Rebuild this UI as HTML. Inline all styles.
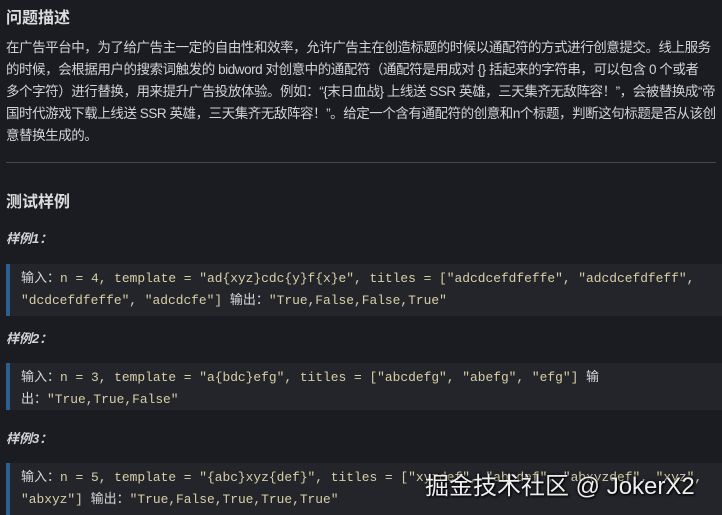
<!DOCTYPE html>
<html><head><meta charset="utf-8"><style>
body{margin:0;width:722px;height:512px;overflow:hidden;background:#1b1c21;color:#d2d3d6;font-family:"Liberation Sans","Noto Sans CJK SC",sans-serif;position:relative}
.a{position:absolute;white-space:nowrap}
.p{font-size:13.5px;left:6px;line-height:22px;letter-spacing:-0.45px}
.ex{left:6px;font-size:13px;font-weight:bold;font-style:italic}
.blk{position:absolute;left:6px;right:0;background:#23252b;border-left:4px solid #2a5f8f;overflow:hidden}
.code{position:absolute;left:11px;font-family:"Liberation Mono","Noto Sans CJK SC",monospace;font-size:12.9px;line-height:21px;color:#d9cfa6;white-space:nowrap}
.code b{font-weight:normal;color:#d8d8d8;font-family:"Liberation Sans","Noto Sans CJK SC",sans-serif;font-size:13px}
hr{position:absolute;left:6px;right:6px;top:162px;border:0;border-top:1px solid #45474c;margin:0}
.wm{position:absolute;left:425px;top:466px;font-size:24px;color:#eee;text-shadow:0 0 3px #000,1px 1px 2px #000;white-space:nowrap}
</style></head><body>
<div class="a" style="left:6px;top:4px;font-size:16px;font-weight:bold;color:#dcdcdc">问题描述</div>
<div class="a p" style="top:37px">在广告平台中，为了给广告主一定的自由性和效率，允许广告主在创造标题的时候以通配符的方式进行创意提交。线上服务<br>的时候，会根据用户的搜索词触发的 bidword 对创意中的通配符（通配符是用成对 {} 括起来的字符串，可以包含 0 个或者<br>多个字符）进行替换，用来提升广告投放体验。例如：“{末日血战} 上线送 SSR 英雄，三天集齐无敌阵容！”，会被替换成“帝<br>国时代游戏下载上线送 SSR 英雄，三天集齐无敌阵容！”。给定一个含有通配符的创意和n个标题，判断这句标题是否从该创<br>意替换生成的。</div>
<hr>
<div class="a" style="left:6px;top:188px;font-size:16px;font-weight:bold;color:#dcdcdc">测试样例</div>
<div class="a ex" style="top:228px">样例1：</div>
<div class="blk" style="top:264px;height:52px"><div class="code" style="top:3px"><b>输入：</b>n = 4, template = "ad{xyz}cdc{y}f{x}e", titles = ["adcdcefdfeffe", "adcdcefdfeff",<br>"dcdcefdfeffe", "adcdcfe"] <b>输出：</b>"True,False,False,True"</div></div>
<div class="a ex" style="top:328px">样例2：</div>
<div class="blk" style="top:363px;height:47px"><div class="code" style="top:3px"><b>输入：</b>n = 3, template = "a{bdc}efg", titles = ["abcdefg", "abefg", "efg"] <b>输</b><br><b>出：</b>"True,True,False"</div></div>
<div class="a ex" style="top:428px">样例3：</div>
<div class="blk" style="top:463px;height:52px"><div class="code" style="top:3px"><b>输入：</b>n = 5, template = "{abc}xyz{def}", titles = ["xyzdef", "abcdef", "abxyzdef", "xyz",<br>"abxyz"] <b>输出：</b>"True,False,True,True,True"</div></div>
<div class="wm">掘金技术社区 @ JokerX2</div>
</body></html>
